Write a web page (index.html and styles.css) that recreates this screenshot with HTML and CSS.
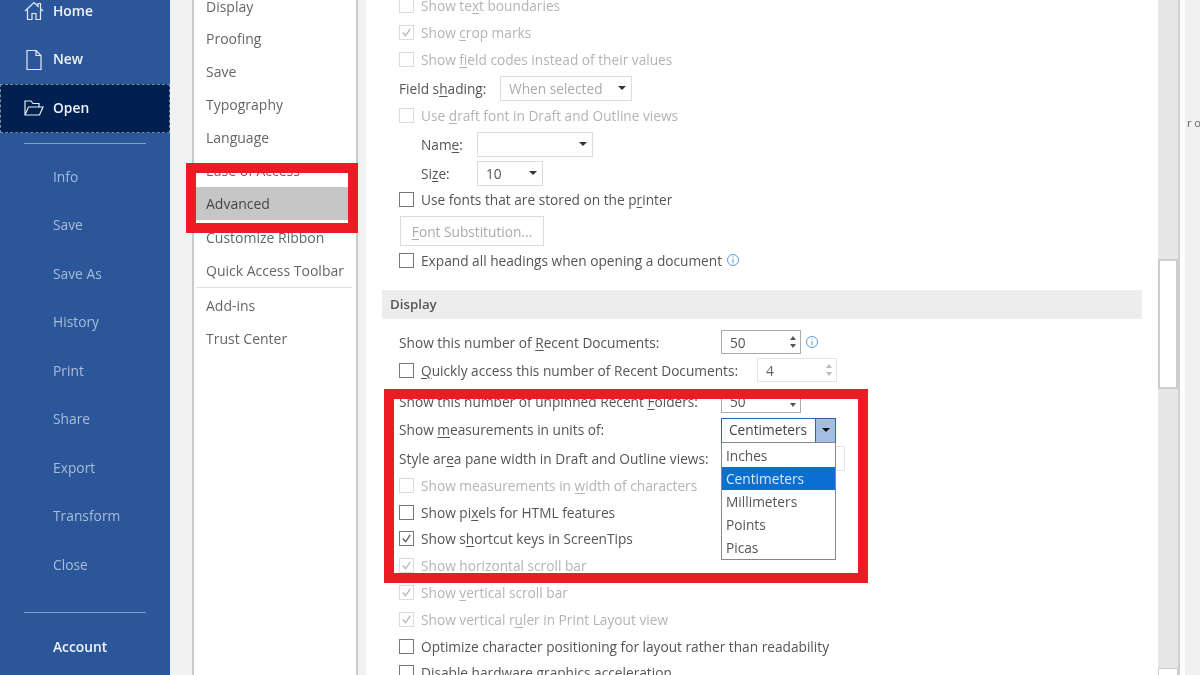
FILE: index.html
```html
<!DOCTYPE html>
<html lang="en">
<head>
<meta charset="utf-8">
<title>Word Options</title>
<link rel="stylesheet" href="styles.css">
</head>
<body>
<div class="app">
  <aside class="backstage">
    <div class="bs-item"><svg class="bs-icon" viewBox="0 0 20 20"><path d="M1 10 10 1.500l4 3.800V2.500h2.500v5.200L19 10M3.500 8.500V18.500h4.500V12.500h4V18.500h4.500V8.500"/></svg><span>Home</span></div>
    <div class="bs-item"><svg class="bs-icon" viewBox="0 0 20 20"><path d="M3 .5h9l5 5v14H3zM12 .5v5h5"/></svg><span>New</span></div>
    <div class="bs-item bs-active"><svg class="bs-icon" viewBox="0 0 20 20"><path d="M1 17V3h6l2 2.500h6V9M1 17l3.500-8H19l-3.500 8z"/></svg><span>Open</span></div>
    <div class="bs-sep"></div>
    <div class="bs-item bs-dim"><span>Info</span></div>
    <div class="bs-item bs-dim"><span>Save</span></div>
    <div class="bs-item bs-dim"><span>Save As</span></div>
    <div class="bs-item bs-dim"><span>History</span></div>
    <div class="bs-item bs-dim"><span>Print</span></div>
    <div class="bs-item bs-dim"><span>Share</span></div>
    <div class="bs-item bs-dim"><span>Export</span></div>
    <div class="bs-item bs-dim"><span>Transform</span></div>
    <div class="bs-item bs-dim"><span>Close</span></div>
    <div class="bs-sep bs-sep-low"></div>
    <div class="bs-item"><span>Account</span></div>
  </aside>

  <div class="gutter"></div>

  <nav class="cats">
    <div class="cat">Display</div>
    <div class="cat">Proofing</div>
    <div class="cat">Save</div>
    <div class="cat">Typography</div>
    <div class="cat">Language</div>
    <div class="cat">Ease of Access</div>
    <div class="cat cat-on">Advanced</div>
    <div class="cat">Customize Ribbon</div>
    <div class="cat">Quick Access Toolbar</div>
    <div class="cat-sep"></div>
    <div class="cat">Add-ins</div>
    <div class="cat">Trust Center</div>
  </nav>

  <div class="split"></div>

  <main class="pane">
    <div class="options">
      <div class="row off"><span class="box"></span><span>Show te<u>x</u>t boundaries</span></div>
      <div class="row off"><span class="box"><svg viewBox="0 0 14 14"><path d="M3 7l3 3.500L11 3"/></svg></span><span>Show <u>c</u>rop marks</span></div>
      <div class="row off"><span class="box"></span><span>Show <u>f</u>ield codes instead of their values</span></div>
      <div class="row"><span class="lab-shade">Field s<u>h</u>ading:</span><span class="sel sel-shade off-text">When selected<i class="caret"></i></span></div>
      <div class="row off"><span class="box"></span><span>Use <u>d</u>raft font in Draft and Outline views</span></div>
      <div class="row row-in"><span class="lab-font">Nam<u>e</u>:</span><span class="sel sel-name"><i class="caret"></i></span></div>
      <div class="row row-in"><span class="lab-font">Si<u>z</u>e:</span><span class="sel sel-size">10<i class="caret"></i></span></div>
      <div class="row"><span class="box box-on"></span><span>Use fonts that are stored on the p<u>r</u>inter</span></div>
      <div class="row"><span class="btn"><span><u>F</u>ont Substitution...</span></span></div>
      <div class="row"><span class="box box-on"></span><span>Expand all headings when opening a document</span><svg class="info info-doc" viewBox="0 0 14 14"><circle cx="7" cy="7" r="5.500"/><path d="M7 6v4.500M7 3.500v1.200"/></svg></div>
      <div class="band">Display</div>
      <div class="row"><span class="lab-wide">Show this number of <u>R</u>ecent Documents:</span><span class="spin">50<span class="arrows"><i class="up"></i><i class="down"></i></span></span><svg class="info" viewBox="0 0 14 14"><circle cx="7" cy="7" r="5.500"/><path d="M7 6v4.500M7 3.500v1.200"/></svg></div>
      <div class="row"><span class="box box-on"></span><span class="lab-quick"><u>Q</u>uickly access this number of Recent Documents:</span><span class="spin spin-off">4<span class="arrows"><i class="up"></i><i class="down"></i></span></span></div>
      <div class="row"><span class="lab-wide">Show this number of unpinned Recent <u>F</u>olders:</span><span class="spin">50<span class="arrows"><i class="up"></i><i class="down"></i></span></span></div>
      <div class="row"><span class="lab-wide">Show <u>m</u>easurements in units of:</span>
        <span class="combo"><span class="combo-val">Centimeters</span><span class="combo-btn"><i class="caret"></i></span>
          <span class="popup">
            <span class="opt">Inches</span>
            <span class="opt opt-on">Centimeters</span>
            <span class="opt">Millimeters</span>
            <span class="opt">Points</span>
            <span class="opt">Picas</span>
          </span>
        </span>
      </div>
      <div class="row"><span class="lab-wide">Style ar<u>e</u>a pane width in Draft and Outline views:</span><span class="field"></span></div>
      <div class="row off"><span class="box"></span><span>Show measurements in <u>w</u>idth of characters</span></div>
      <div class="row"><span class="box box-on"></span><span>Show pi<u>x</u>els for HTML features</span></div>
      <div class="row"><span class="box box-on"><svg viewBox="0 0 14 14"><path d="M3 7l3 3.500L11 3"/></svg></span><span>Show s<u>h</u>ortcut keys in ScreenTips</span></div>
      <div class="row off"><span class="box"><svg viewBox="0 0 14 14"><path d="M3 7l3 3.500L11 3"/></svg></span><span>Show h<u>o</u>rizontal scroll bar</span></div>
      <div class="row off"><span class="box"><svg viewBox="0 0 14 14"><path d="M3 7l3 3.500L11 3"/></svg></span><span>Show <u>v</u>ertical scroll bar</span></div>
      <div class="row off"><span class="box"><svg viewBox="0 0 14 14"><path d="M3 7l3 3.500L11 3"/></svg></span><span>Show vertical r<u>u</u>ler in Print Layout view</span></div>
      <div class="row"><span class="box box-on"></span><span>Optimize character positioning for layout rather than readability</span></div>
      <div class="row"><span class="box box-on"></span><span>Disable hardware graphics acceleration</span></div>
    </div>
  </main>

  <div class="scrollbar"><div class="thumb"></div><div class="thumb-end"></div></div>
  <div class="edge"></div>
  <div class="behind"><span class="stray">r o</span></div>

  <div class="frame frame-nav"></div>
  <div class="frame frame-units"></div>
</div>
</body>
</html>
```
FILE: styles.css
```css
* { box-sizing: border-box; }
html, body { margin: 0; height: 100%; overflow: hidden; background: #fff; }
.app {
  position: relative;
  display: flex;
  width: 1200px;
  height: 675px;
  overflow: hidden;
  font-family: "Open Sans", "Noto Sans", sans-serif;
  font-size: 13.700px;
  color: #555;
  filter: blur(.6px);
}
u { text-underline-offset: 2px; text-decoration-thickness: 1px; }

/* backstage */
.backstage {
  flex: 0 0 170px;
  height: 675px;
  background: #2b579a;
  color: #f0f3f8;
  display: flex;
  flex-direction: column;
}
.backstage > :first-child { margin-top: -13px; }
.bs-item {
  flex: 0 0 48.500px;
  display: flex;
  align-items: center;
  padding: 0 0 2px 53px;
  position: relative;
  font-weight: 600;
  font-size: 13.800px;
}
.bs-dim { color: #a9bcd8; font-weight: 400; padding-bottom: 1px; }
.bs-active {
  background: #002050;
  outline: 1px dashed #7d8aa0;
  outline-offset: -1px;
}
.bs-icon {
  position: absolute;
  left: 24px;
  top: 14px;
  width: 20px;
  height: 20px;
  fill: none;
  stroke: #e6ebf3;
  stroke-width: 1.200;
}
.bs-sep { flex: 0 0 20px; position: relative; }
.bs-sep::after {
  content: "";
  position: absolute;
  left: 24px;
  width: 122px;
  top: 10px;
  height: 1px;
  background: #85a0c8;
}
.bs-sep-low { flex: 0 0 34px; }
.bs-sep-low::after { top: 23px; }

/* gutter and category list */
.gutter { flex: 0 0 22px; background: #f1f1f1; }
.cats {
  flex: 0 0 166px;
  background: #fff;
  border-left: 2px solid #c9c9c9;
  border-right: 2px solid #c9c9c9;
  display: grid;
  grid-template-rows: 32px 33px 33px 33px 33px 33px 34px 33px 33px 2px 33px 33px;
  margin-top: -10px;
  height: 700px;
  align-content: start;
  color: #666;
  font-size: 14px;
}
.cat { display: flex; align-items: center; padding-left: 12px; }
.cat-on { background: #c6c6c6; color: #444; margin-bottom: 1px; padding-bottom: 1px; }
.cat-sep { margin: 0 4px 1px 2px; background: #ddd; }
.split { flex: 0 0 8px; background: #f1f1f1; }

/* options pane */
.pane { flex: 0 0 792px; height: 675px; background: #fff; overflow: hidden; padding-left: 16px; }
.options {
  margin-top: -8px;
  width: 760px;
  display: grid;
  grid-template-rows: 28px 26px 28px 30px 24px 34px 24px 28px 36px 22px 58px 26px 30px 32px 24px 34px 20px 34px 18px 36px 18px 36px 18px 34px;
}
.row {
  display: flex;
  align-items: center;
  padding: 0 0 2px 17px;
  white-space: nowrap;
  min-height: 0;
}
.row-in { padding-left: 39px; }
.off { color: #b4b4b4; }
.off-text { color: #aaa; }
.box {
  flex: 0 0 15px;
  height: 15px;
  margin-right: 7px;
  border: 1px solid #dcdcdc;
  display: block;
  background: #fff;
}
.box-on { border-color: #777; }
.box svg { display: block; width: 13px; height: 13px; fill: none; stroke: currentColor; stroke-width: 1.400; }
.lab-shade { width: 101px; }
.lab-font { width: 56px; }
.lab-wide { width: 322px; flex: none; }
.lab-quick { width: 336px; flex: none; }
.sel {
  height: 25px;
  flex: none;
  border: 1px solid #dcdcdc;
  display: flex;
  align-items: center;
  justify-content: space-between;
  padding: 0 5px 0 8px;
}
.sel-shade { width: 132px; }
.sel-name { width: 116px; justify-content: flex-end; }
.sel-size { width: 66px; }
.caret {
  display: block;
  flex: none;
  width: 0;
  height: 0;
  border-left: 4px solid transparent;
  border-right: 4px solid transparent;
  border-top: 4px solid #333;
}
.btn {
  width: 144px;
  height: 30px;
  margin-left: 1px;
  border: 1px solid #dcdcdc;
  display: flex;
  align-items: center;
  justify-content: center;
  color: #aaa;
}
.info { width: 14px; height: 14px; margin-left: 4px; fill: none; stroke: #5b9bd5; stroke-width: 1; }
.info-doc { margin-left: 4px; }
.band {
  margin: 18px 0 11px;
  background: #ededed;
  height: 29px;
  display: flex;
  align-items: center;
  padding: 0 0 2px 8px;
  font-weight: 600;
  font-size: 13.300px;
  color: #555;
}
.spin {
  width: 80px;
  height: 24px;
  flex: none;
  border: 1px solid #aaa;
  display: flex;
  align-items: center;
  justify-content: space-between;
  padding: 0 4px 0 8px;
  position: relative;
}
.spin-off { border-color: #e4e4e4; color: #666; }
.arrows { display: flex; flex-direction: column; gap: 4px; }
.up, .down { display: block; width: 0; height: 0; border-left: 3px solid transparent; border-right: 3px solid transparent; }
.up { border-bottom: 4px solid #555; }
.down { border-top: 4px solid #555; }
.spin-off .up { border-bottom-color: #bbb; }
.spin-off .down { border-top-color: #bbb; }
.combo {
  position: relative;
  width: 115px;
  height: 25px;
  flex: none;
  margin-top: 2px;
  border: 1px solid #2b66a8;
  display: flex;
  background: #fff;
  color: #444;
}
.combo-val { flex: 1; display: flex; align-items: center; padding: 0 0 2px 7px; }
.combo-btn {
  flex: 0 0 20px;
  background: #a3bde3;
  border-left: 1px solid #2b66a8;
  display: flex;
  align-items: center;
  justify-content: center;
}
.combo-btn .caret { border-top-color: #111; }
.popup {
  position: absolute;
  left: -1px;
  top: 23px;
  width: 115px;
  height: 118px;
  background: #fff;
  border: 1px solid #888;
  z-index: 2;
  padding-top: 1px;
  display: flex;
  flex-direction: column;
}
.opt { flex: 0 0 23px; display: flex; align-items: center; padding-left: 4px; color: #555; }
.opt-on { background: #0a6fd0; color: #d8e8f8; }
.field { width: 124px; height: 25px; flex: none; border: 1px solid #e6e6e6; }

/* scrollbar and what lies behind the dialog */
.scrollbar {
  flex: 0 0 20px;
  height: 675px;
  background: #e6e6e6;
  padding-top: 259px;
}
.thumb { height: 130px; background: #fff; border: 2px solid #cdcdcd; }
.thumb-end { height: 20px; margin-top: 279px; background: #fff; border: 1px solid #cdcdcd; }
.edge { flex: 0 0 7px; background: #fff; border-left: 2px solid #cfcfcf; }
.behind { flex: 1; background: #f0f0f0; padding: 115px 0 0 2px; font-size: 11px; color: #666; white-space: nowrap; overflow: hidden; }
.stray { display: block; }

/* red annotations drawn over the screenshot */
.frame { position: absolute; border: 10px solid #ed1c24; z-index: 5; }
.frame-nav { left: 186px; top: 163px; width: 172px; height: 70px; }
.frame-units { left: 384px; top: 389px; width: 484px; height: 194px; }
```
